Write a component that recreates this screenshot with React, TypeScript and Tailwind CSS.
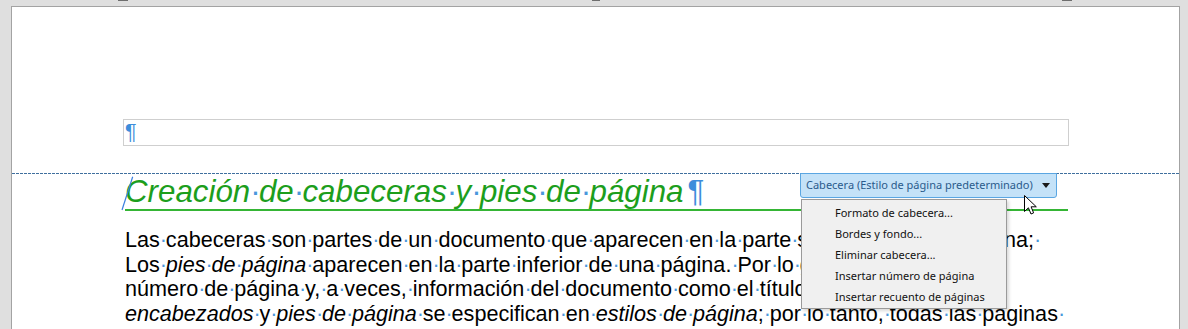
import React from "react"

// LibreOffice shows spaces as blue middle dots; keep the advance of a real space
function Dot() {
  return <span className="inline-block w-[0.278em] text-center not-italic text-[#4a97dc]">·</span>
}

function Marked({ text, italic = false, className = "" }: { text: string; italic?: boolean; className?: string }) {
  const parts = text.split(" ")
  return (
    <span className={`${italic ? "italic" : ""} ${className}`}>
      {parts.map((p, i) => (
        <React.Fragment key={i}>
          {p}
          {i < parts.length - 1 && <Dot />}
        </React.Fragment>
      ))}
    </span>
  )
}

const menuItems = [
  "Formato de cabecera...",
  "Bordes y fondo...",
  "Eliminar cabecera...",
  "Insertar número de página",
  "Insertar recuento de páginas",
]

export default function App() {
  return (
    <div className="w-[1188px] h-[329px] overflow-hidden bg-[#dfdfdf] flex flex-col font-['Liberation_Sans',Arial,sans-serif]">
      {/* ruler markers */}
      <div className="h-[6px] flex items-start shrink-0">
        <div className="ml-[118px] w-[10px] h-[1px] bg-[#6e6e6e]" />
        <div className="ml-[464px] w-[8px] h-[1px] bg-[#6e6e6e]" />
        <div className="ml-[462px] w-[10px] h-[1px] bg-[#6e6e6e]" />
      </div>

      {/* page */}
      <div className="relative ml-[11px] w-[1169px] flex-1 bg-white border-t border-x border-[#a3a3a3]">
        {/* header frame */}
        <div className="mt-[112px] ml-[111px] w-[946px] h-[27px] border border-[#cfcfcf] pl-[1px] text-[21.6px] leading-[24.67px] text-[#3d8ddb]">
          ¶
        </div>

        {/* header boundary */}
        <div className="mt-[27px] h-[1px] bg-[repeating-linear-gradient(to_right,#3f6f9e_0px,#3f6f9e_3px,transparent_3px,transparent_4px)]" />

        {/* heading */}
        <div className="relative pl-[113px] text-[31.3px] leading-[35px] text-[#1c9e1c] whitespace-nowrap">
          <Marked italic text="Creación de cabeceras y pies de página" />
          <span className="not-italic ml-[4px] text-[#3d8ddb]">¶</span>
          <svg className="absolute left-[108px] top-0" width="14" height="38" viewBox="0 0 14 38">
            <line x1="12.7" y1="2.7" x2="2" y2="36" stroke="#3a7fe0" strokeWidth="1.2" />
          </svg>
        </div>
        <div className="ml-[113px] w-[943px] h-[2px] bg-[#35b535]" />

        {/* body */}
        <div className="mt-[17px] pl-[113px] text-[21.6px] leading-[24.67px] text-black whitespace-nowrap">
          <div>
            <Marked text="Las cabeceras son partes de un documento que aparecen en la parte s" />
            <Marked className="tracking-[0.6px]" text="uperior de una pági" />
            <Marked text="na; " />
          </div>
          <div>
            <Marked text="Los " />
            <Marked italic text="pies de página" />
            <Marked text=" aparecen en la parte inferior de una página. Por lo general, muestran " />
          </div>
          <div>
            <Marked text="número de página y, a veces, información del documento como el título. Los " />
          </div>
          <div>
            <Marked italic text="encabezados" />
            <Marked text=" y " />
            <Marked italic text="pies de página" />
            <Marked text=" se especifican en " />
            <Marked italic text="estilos de página" />
            <Marked text="; por lo tanto, todas las páginas " />
          </div>
        </div>

        {/* header popup button */}
        <div className="absolute left-[788px] top-[166px] w-[257px] h-[25px] flex items-center justify-between pl-[5px] pr-[5px] bg-[#c4e2f8] border border-[#5aa6e2] rounded-b-[3px] font-['Noto_Sans',sans-serif] text-[11px] text-[#2a5b8c] whitespace-nowrap">
          <span>Cabecera (Estilo de página predeterminado)</span>
          <svg width="8" height="5" viewBox="0 0 8 5" className="mr-[1px]">
            <path d="M0 0 H8 L4 5 Z" fill="#1a1a1a" />
          </svg>
        </div>

        {/* context menu */}
        <div className="absolute left-[789px] top-[192px] w-[206px] h-[110px] bg-[#f0f0f0] border border-[#9a9a9a] shadow-[2px_2px_3px_rgba(0,0,0,0.15)] pt-[3px] font-['Noto_Sans',sans-serif] text-[11px] text-[#111]">
          {menuItems.map((m) => (
            <div key={m} className="h-[21px] flex items-center pl-[33px] whitespace-nowrap">
              {m}
            </div>
          ))}
        </div>

        {/* mouse pointer */}
        <svg className="absolute left-[1012px] top-[188px]" width="14" height="21" viewBox="0 0 14 21">
          <path d="M0.5 0.5 L0.5 16.5 L4.4 12.8 L7 19 L9.6 17.9 L7.1 11.8 L12.3 11.8 Z" fill="#fff" stroke="#000" strokeWidth="1" strokeLinejoin="round" />
        </svg>
      </div>
    </div>
  )
}
